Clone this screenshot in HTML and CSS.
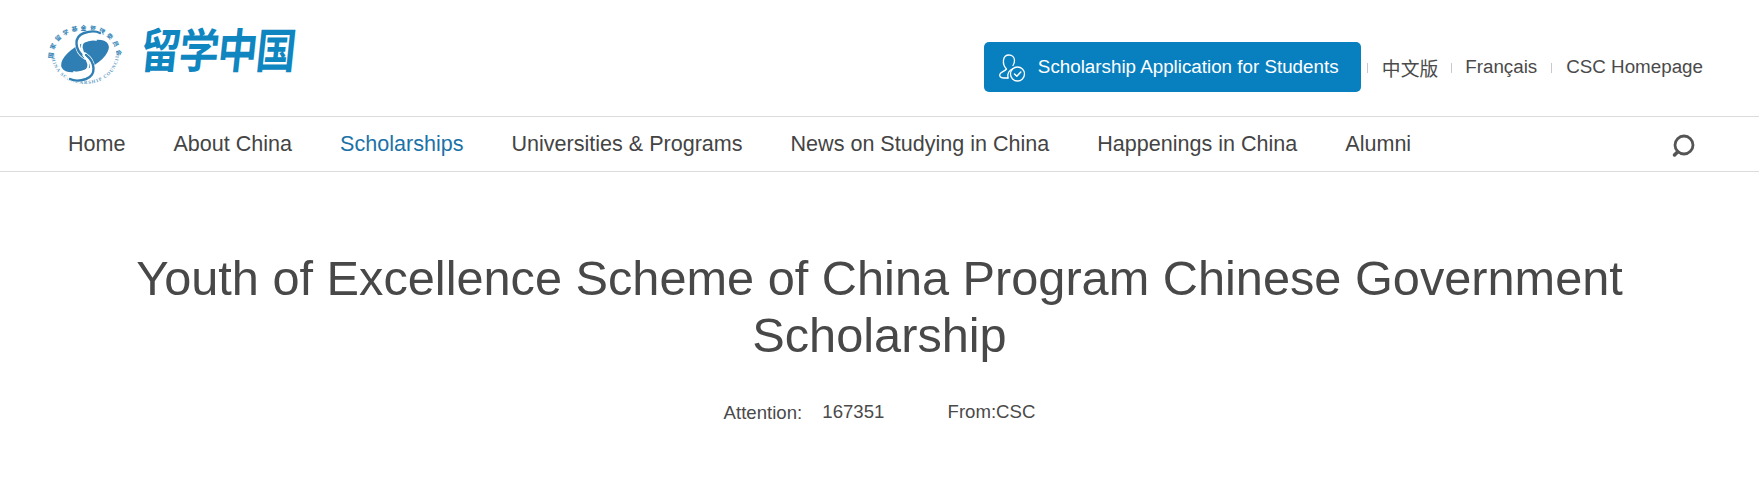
FILE: index.html
```html
<!DOCTYPE html>
<html lang="en">
<head>
<meta charset="utf-8">
<title>Youth of Excellence Scheme of China Program Chinese Government Scholarship</title>
<link rel="stylesheet" href="styles.css">
</head>
<body>
<header class="top">
  <a class="logo" href="#">
    <svg class="emblem" width="72" height="62" viewBox="0 0 72 62">
      <defs>
        <path id="arcTop" d="M4 33C5 15 19 6 36 6s31 9 32 27"/>
        <path id="arcBot" d="M2 30c1 18 16 30 34 30s33-12 34-30"/>
        <g id="hook" fill="none" stroke-linecap="round">
          <path d="M36 33C27 27 25 14 36 10c5-2 11-2 15 0" stroke="#fff" stroke-width="5"/>
          <path d="M35 33C26 26 24 13 35 9c6-2 12-2 16 0" stroke="#2f7fb5" stroke-width="2.400"/>
          <path d="M37 32c-5-5-6-12-1-15 4-2 8-2 11-1" stroke="#fff" stroke-width="1.800"/>
        </g>
      </defs>
      <text class="emblem-cn"><textPath href="#arcTop" startOffset="50%" text-anchor="middle">国家留学基金管理委员会</textPath></text>
      <text class="emblem-en"><textPath href="#arcBot" startOffset="50%" text-anchor="middle">CHINA SCHOLARSHIP COUNCIL</textPath></text>
      <ellipse cx="36" cy="32" rx="26" ry="12.500" transform="rotate(-27 36 32)" fill="#2f7fb5"/>
      <use href="#hook"/>
      <use href="#hook" transform="rotate(180 36 32)"/>
    </svg>
    <span class="brand">留学中国</span>
  </a>
  <div class="top-links">
    <a class="apply" href="#">
      <svg width="28" height="30" viewBox="0 0 28 30" fill="none" stroke="#fff" stroke-width="1.300" stroke-linecap="round" stroke-linejoin="round">
        <path d="M10 26H5.500C2.500 26 1 24 2 22c1-2 5-3 6.500-5C6 14.500 5 11.500 5.500 8 6 4.500 8.500 3 11 3c3 0 5.500 2 5.500 5.500 0 2-.5 3.500-1.500 5"/>
        <path d="M10 26c-1-4 1-8 5-9.500"/>
        <circle cx="19.500" cy="22" r="7"/>
        <path d="M16.500 22l2.300 2.300 4-4.300" stroke-width="1.500"/>
      </svg>
      <span>Scholarship Application for Students</span>
    </a>
    <i class="sep"></i>
    <a class="cn" href="#">中文版</a>
    <i class="sep sep-tight"></i>
    <a href="#">Français</a>
    <i class="sep"></i>
    <a href="#">CSC Homepage</a>
  </div>
</header>
<nav class="nav">
  <ul class="nav-list">
    <li><a href="#">Home</a></li>
    <li><a href="#">About China</a></li>
    <li><a class="active" href="#">Scholarships</a></li>
    <li><a href="#">Universities &amp; Programs</a></li>
    <li><a href="#">News on Studying in China</a></li>
    <li><a href="#">Happenings in China</a></li>
    <li><a href="#">Alumni</a></li>
  </ul>
  <svg class="search" width="26" height="26" viewBox="0 0 26 26" fill="none" stroke="#555" stroke-linecap="round">
    <circle cx="14" cy="12" r="9" stroke-width="2.800"/>
    <path d="M7.500 19l-3 3" stroke-width="3.500"/>
  </svg>
</nav>
<main class="article">
  <h1>Youth of Excellence Scheme of China Program Chinese Government Scholarship</h1>
  <div class="meta">
    <span class="attn">Attention:</span>
    <span class="count">167351</span>
    <span class="from">From:CSC</span>
  </div>
</main>
</body>
</html>
```
FILE: styles.css
```css
* { box-sizing: border-box; }
html, body { margin: 0; padding: 0; }
body {
  background: #fff;
  color: #464646;
  font-family: "Liberation Sans", Arial, "Noto Sans CJK SC", sans-serif;
  overflow: hidden;
}
a { color: inherit; text-decoration: none; }

.top {
  height: 116px;
  display: flex;
  justify-content: space-between;
  padding: 24px 56px 0 49px;
}
.logo {
  display: flex;
  align-items: flex-start;
  gap: 20px;
}
.emblem { display: block; overflow: visible; }
.emblem-cn { font: 700 6px "Noto Sans CJK SC", sans-serif; fill: #2f7fb5; letter-spacing: 2.800px; }
.emblem-en { font: 700 4.800px "Liberation Serif", serif; fill: #5d9ac4; letter-spacing: 1px; }
.brand {
  font: 700 40px/1 "Noto Sans CJK SC", sans-serif;
  color: #0f86bf;
  letter-spacing: -1.500px;
  margin-top: 4px;
  transform: skewX(-6deg) scaleY(1.180);
}

.top-links {
  display: flex;
  align-items: center;
  height: 50px;
  margin-top: 18px;
  font-size: 18.800px;
  color: #4a4a4a;
}
.apply {
  display: flex;
  align-items: center;
  gap: 12px;
  width: 377px;
  height: 50px;
  padding-left: 14px;
  background: #0880bf;
  border-radius: 5px;
  color: #fff;
}
.sep {
  width: 1px;
  height: 10px;
  margin: 2px 14px 0;
  background: #c9c9c9;
}
.sep-tight { margin-left: 13px; margin-right: 13px; }
.apply + .sep { margin-left: 6px; margin-right: 14px; }
.cn { font-family: "Noto Sans CJK SC", sans-serif; }

.nav {
  height: 56px;
  border-top: 1px solid #dcdcdc;
  border-bottom: 1px solid #dcdcdc;
  display: flex;
  align-items: center;
  justify-content: space-between;
  padding: 0 63px 0 68px;
}
.nav-list {
  list-style: none;
  margin: 0;
  padding: 0;
  display: flex;
  gap: 48px;
  font-size: 21.550px;
  color: #444;
}
.active { color: #1b72a8; }
.search { display: block; margin-top: 3px; }

.article { text-align: center; padding: 0 120px; }
.article h1 {
  margin: 78px 0 0;
  font-size: 48.700px;
  line-height: 57px;
  font-weight: 400;
  color: #484848;
}
.meta {
  margin-top: 36px;
  font-size: 18.600px;
  line-height: 24px;
  color: #4a4a4a;
}
.attn { margin-right: 15px; position: relative; top: 1px; }
.count { margin-right: 58px; }
```
